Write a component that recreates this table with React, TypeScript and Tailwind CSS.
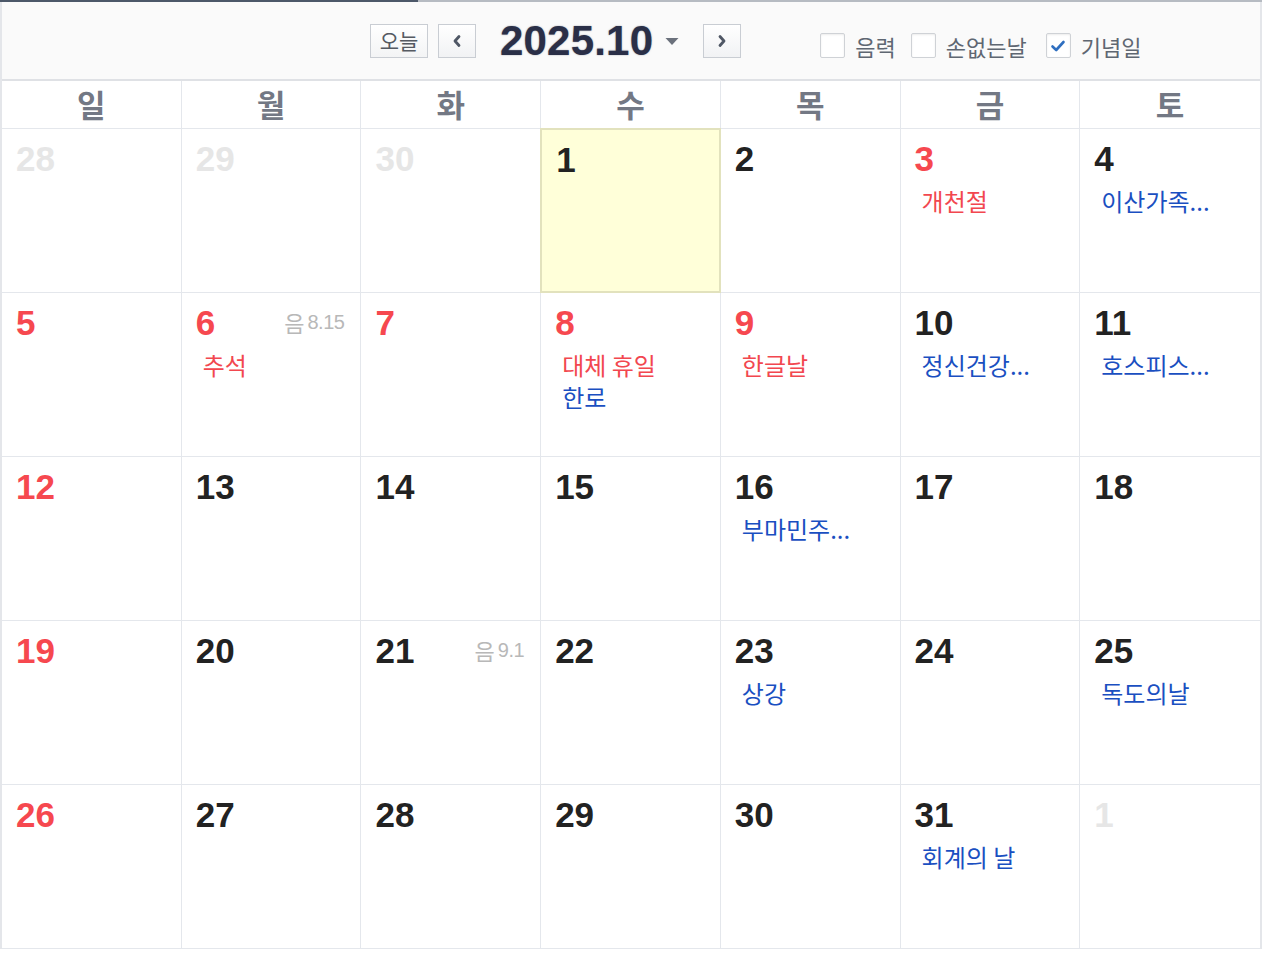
import React from "react";

type Ev = { t: string; c: "r" | "b" };
type Cell = { d: number; kind: "prev" | "next" | "cur"; red?: boolean; today?: boolean; lunar?: string; ev?: Ev[] };

const rows: Cell[][] = [
  [
    { d: 28, kind: "prev" },
    { d: 29, kind: "prev" },
    { d: 30, kind: "prev" },
    { d: 1, kind: "cur", today: true },
    { d: 2, kind: "cur" },
    { d: 3, kind: "cur", red: true, ev: [{ t: "개천절", c: "r" }] },
    { d: 4, kind: "cur", ev: [{ t: "이산가족...", c: "b" }] },
  ],
  [
    { d: 5, kind: "cur", red: true },
    { d: 6, kind: "cur", red: true, lunar: "8.15", ev: [{ t: "추석", c: "r" }] },
    { d: 7, kind: "cur", red: true },
    { d: 8, kind: "cur", red: true, ev: [{ t: "대체 휴일", c: "r" }, { t: "한로", c: "b" }] },
    { d: 9, kind: "cur", red: true, ev: [{ t: "한글날", c: "r" }] },
    { d: 10, kind: "cur", ev: [{ t: "정신건강...", c: "b" }] },
    { d: 11, kind: "cur", ev: [{ t: "호스피스...", c: "b" }] },
  ],
  [
    { d: 12, kind: "cur", red: true },
    { d: 13, kind: "cur" },
    { d: 14, kind: "cur" },
    { d: 15, kind: "cur" },
    { d: 16, kind: "cur", ev: [{ t: "부마민주...", c: "b" }] },
    { d: 17, kind: "cur" },
    { d: 18, kind: "cur" },
  ],
  [
    { d: 19, kind: "cur", red: true },
    { d: 20, kind: "cur" },
    { d: 21, kind: "cur", lunar: "9.1" },
    { d: 22, kind: "cur" },
    { d: 23, kind: "cur", ev: [{ t: "상강", c: "b" }] },
    { d: 24, kind: "cur" },
    { d: 25, kind: "cur", ev: [{ t: "독도의날", c: "b" }] },
  ],
  [
    { d: 26, kind: "cur", red: true },
    { d: 27, kind: "cur" },
    { d: 28, kind: "cur" },
    { d: 29, kind: "cur" },
    { d: 30, kind: "cur" },
    { d: 31, kind: "cur", ev: [{ t: "회계의 날", c: "b" }] },
    { d: 1, kind: "next" },
  ],
];

const days = ["일", "월", "화", "수", "목", "금", "토"];

function Checkbox({ checked }: { checked?: boolean }) {
  return (
    <span className="flex h-[25px] w-[25px] items-center justify-center rounded-[2px] border border-[#cfd2d6] bg-white shadow-[inset_0_1px_2px_rgba(0,0,0,0.08)]">
      {checked && (
        <svg width="16" height="14" viewBox="0 0 16 14">
          <path d="M2.5 7.5 L6.2 11 L13.5 3" fill="none" stroke="#2f6fc0" strokeWidth="2.6" strokeLinecap="round" strokeLinejoin="round" />
        </svg>
      )}
    </span>
  );
}

function NavBtn({ dir }: { dir: "l" | "r" }) {
  return (
    <button className="flex h-[34px] w-[38px] items-center justify-center border border-[#c9cdd3] bg-gradient-to-b from-white to-[#f1f2f4]">
      <svg width="10" height="14" viewBox="0 0 10 14">
        {dir === "l" ? (
          <path d="M7 2.5 L3 7 L7 11.5" fill="none" stroke="#4f5765" strokeWidth="2.8" strokeLinecap="round" strokeLinejoin="round" />
        ) : (
          <path d="M3 2.5 L7 7 L3 11.5" fill="none" stroke="#4f5765" strokeWidth="2.8" strokeLinecap="round" strokeLinejoin="round" />
        )}
      </svg>
    </button>
  );
}

export default function App() {
  const kr = "font-['Noto_Sans_CJK_KR','Noto_Sans',sans-serif]";
  return (
    <div className="w-[1262px] bg-white font-['Liberation_Sans','Noto_Sans_CJK_KR',sans-serif]">
      <div className="flex h-[2px]">
        <div className="w-[418px] bg-[#4c5869]" />
        <div className="flex-1 bg-[#b6bbc2]" />
      </div>
      <div className="border-x-2 border-[#e4e6ea]">
        <div className="flex h-[79px] items-center border-b-2 border-[#dfe1e5] bg-[#fafafa] pl-[368px]">
          <button className={`flex h-[34px] w-[58px] items-center justify-center border border-[#c9cdd3] bg-gradient-to-b from-white to-[#f3f4f5] text-[21px] leading-none text-[#555a62] ${kr}`}>
            오늘
          </button>
          <div className="ml-[10px]">
            <NavBtn dir="l" />
          </div>
          <div className="ml-[24px] text-[42px] font-bold leading-none tracking-[0.2px] text-[#2a2f47] [text-shadow:0_0_1.5px_rgba(42,47,71,0.55)]">
            2025.10
          </div>
          <svg className="ml-[11px] mt-[2px]" width="16" height="9" viewBox="0 0 16 9">
            <path d="M1.5 1 L14.5 1 L8 8 Z" fill="#6b717c" />
          </svg>
          <div className="ml-[23px]">
            <NavBtn dir="r" />
          </div>
          <div className={`ml-[79px] mt-[10px] flex items-center text-[22px] leading-none text-[#5f6772] ${kr}`}>
            <Checkbox />
            <span className="ml-[10px]">음력</span>
            <span className="ml-[15px]"><Checkbox /></span>
            <span className="ml-[10px]">손없는날</span>
            <span className="ml-[19px]"><Checkbox checked /></span>
            <span className="ml-[10px]">기념일</span>
          </div>
        </div>
        <div className="grid h-[48px] grid-cols-7 border-b border-[#e4e7ec]">
          {days.map((d, i) => (
            <div
              key={d}
              className={`flex items-center justify-center text-[31px] font-bold text-[#737884] ${kr} ${i < 6 ? "border-r border-[#e4e7ec]" : ""}`}
            >
              {d}
            </div>
          ))}
        </div>
        {rows.map((row, ri) => (
          <div key={ri} className="grid grid-cols-7">
            {row.map((c, ci) => {
              const numColor =
                c.kind !== "cur" ? "text-[#e6e6e6]" : c.red ? "text-[#f6484f]" : "text-[#222222]";
              const cls = c.today
                ? "relative z-10 -ml-px -mt-px h-[165px] border-2 border-[#e2e2bd] bg-[#ffffd9] pl-[14px] pt-[12px] pr-[16px]"
                : `h-[164px] border-b border-[#e4e7ec] pl-[14px] pt-[12px] pr-[16px] ${ci < 6 ? "border-r" : ""}`;
              return (
                <div key={ci} className={cls}>
                  <div className="flex h-[34px] items-center justify-between">
                    <span className={`text-[35px] font-bold leading-none ${numColor}`}>{c.d}</span>
                    {c.lunar && (
                      <span className="flex items-center text-[22px] leading-none text-[#b8b8b8]">
                        <span className={kr}>음</span>
                        <span className="ml-[3px] font-['Liberation_Sans'] text-[20px] tracking-[-0.5px]">{c.lunar}</span>
                      </span>
                    )}
                  </div>
                  {c.ev && (
                    <div className={`mt-[10px] pl-[7px] text-[24px] leading-[32px] ${kr}`}>
                      {c.ev.map((e, ei) => (
                        <div key={ei} className={e.c === "r" ? "text-[#f2474f]" : "text-[#1a4fc1]"}>
                          {e.t}
                        </div>
                      ))}
                    </div>
                  )}
                </div>
              );
            })}
          </div>
        ))}
      </div>
    </div>
  );
}
